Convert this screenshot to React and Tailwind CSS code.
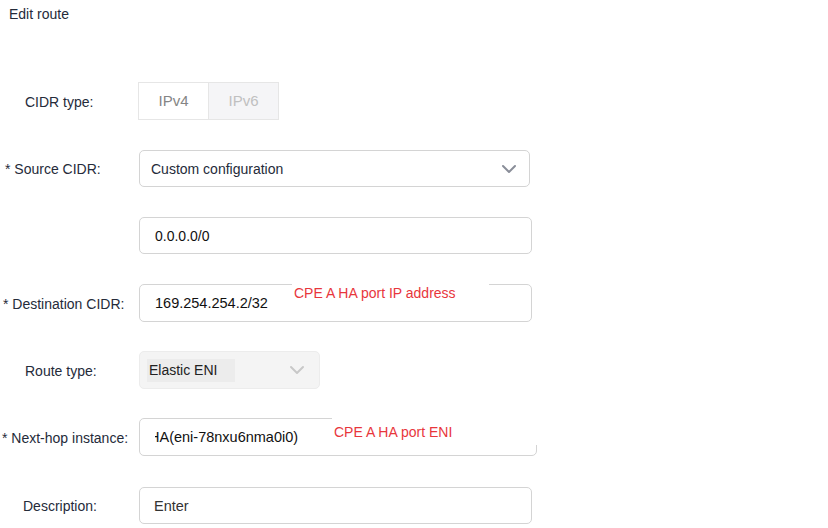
import React from "react";

function Chevron({ color }) {
  return (
    <svg width="16" height="10" viewBox="0 0 16 10" fill="none">
      <path d="M2 2 L8 8 L14 2" stroke={color} strokeWidth="2" strokeLinecap="round" strokeLinejoin="round" />
    </svg>
  );
}

function Label({ children, pl, w = "w-[139px]" }) {
  return <div className={`${w} shrink-0 pt-[2px] text-[14px] text-[#252b3a] ${pl}`}>{children}</div>;
}

export default function App() {
  return (
    <div className="w-[828px] h-[528px] bg-white overflow-hidden text-[#252b3a]" style={{ fontFamily: '"Liberation Sans", Arial, sans-serif' }}>
      <div className="pl-[9px] pt-[4px] h-[24px] leading-[20px] text-[14px]">Edit route</div>

      {/* CIDR type */}
      <div className="flex items-center mt-[58px] h-[38px]">
        <Label pl="pl-[25px]" w="w-[138px]">CIDR type:</Label>
        <div className="flex h-[38px] border border-[#e6e6e6]">
          <div className="w-[69px] flex items-center justify-center text-[15px] text-[#858585] bg-white">IPv4</div>
          <div className="w-[70px] flex items-center justify-center text-[15px] text-[#c0c0c0] bg-[#f5f5f7] border-l border-[#e6e6e6]">IPv6</div>
        </div>
      </div>

      {/* Source CIDR */}
      <div className="flex items-center mt-[30px] h-[37px]">
        <Label pl="pl-[5px]">* Source CIDR:</Label>
        <div className="w-[391px] h-[37px] border border-[#d4d4d4] rounded-[5px] flex items-center justify-between pl-[11px] pr-[12px] text-[14px]">
          <span className="pt-[2px]">Custom configuration</span>
          <Chevron color="#8a8e99" />
        </div>
      </div>

      {/* 0.0.0.0/0 */}
      <div className="flex items-center mt-[30px] h-[37px]">
        <Label pl="pl-0"></Label>
        <div className="w-[393px] h-[37px] border border-[#d4d4d4] rounded-[5px] flex items-center pl-[15px] pt-[1px] text-[14px] text-[#111]">
          0.0.0.0/0
        </div>
      </div>

      {/* Destination CIDR */}
      <div className="flex items-center mt-[30px] h-[38px]">
        <Label pl="pl-[3px]">* Destination CIDR:</Label>
        <div className="relative w-[393px] h-[38px] border border-[#d4d4d4] rounded-[5px] flex items-center pl-[15px] pt-[1px] text-[14.5px] text-[#111]">
          169.254.254.2/32
          <div className="absolute left-[152px] top-[-6px] w-[197px] h-[28px] bg-white pl-[2px] leading-[28px] text-[14px] text-[#e8363c]">
            CPE A HA port IP address
          </div>
        </div>
      </div>

      {/* Route type */}
      <div className="flex items-center mt-[29px] h-[38px]">
        <Label pl="pl-[25px]">Route type:</Label>
        <div className="w-[181px] h-[38px] border border-[#ececec] bg-[#f4f4f4] rounded-[5px] flex items-center justify-between pl-[7px] pr-[14px]">
          <div className="w-[88px] h-[23px] bg-[#ececec] flex items-center pl-[2px] pt-[1px] text-[14px] text-[#222]">Elastic ENI</div>
          <Chevron color="#c8c8c8" />
        </div>
      </div>

      {/* Next-hop instance */}
      <div className="flex items-center mt-[29px] h-[38px]">
        <Label pl="pl-[2px]">* Next-hop instance:</Label>
        <div className="relative w-[398px] h-[38px] border border-[#d4d4d4] rounded-[5px] flex items-center pt-[1px] text-[14.5px] text-[#111]">
          <div className="ml-[15px] overflow-hidden whitespace-nowrap">
            <span className="ml-[-6px]">HA(eni-78nxu6nma0i0)</span>
          </div>
          <div className="absolute left-[192px] top-[-8px] w-[220px] h-[34px] bg-white pl-[2px] pt-[11px] leading-[20px] text-[14px] text-[#e8363c]">
            CPE A HA port ENI
          </div>
        </div>
      </div>

      {/* Description */}
      <div className="flex items-center mt-[31px] h-[37px]">
        <Label pl="pl-[23px]">Description:</Label>
        <div className="w-[393px] h-[37px] border border-[#d4d4d4] rounded-[5px] flex items-center pl-[14px] pt-[2px] text-[14.5px] text-[#333]">
          Enter
        </div>
      </div>
    </div>
  );
}
